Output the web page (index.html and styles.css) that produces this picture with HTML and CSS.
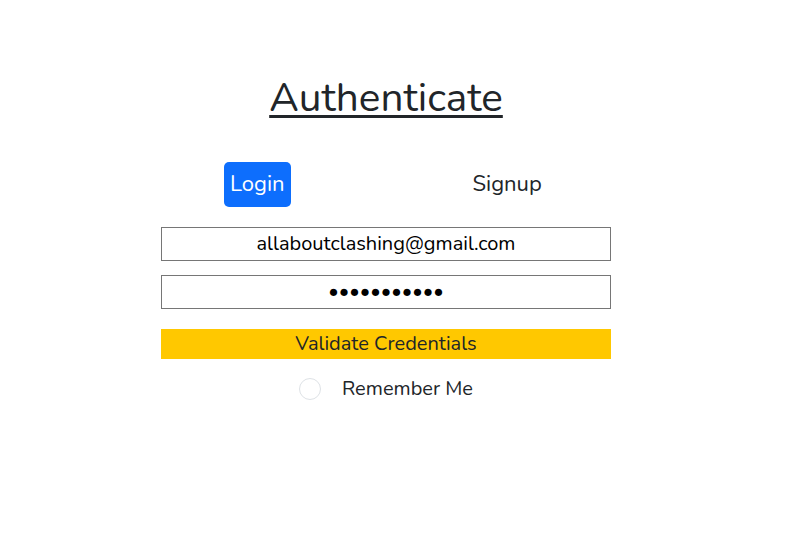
FILE: index.html
```html
<!DOCTYPE html>
<html>
<head>
<meta charset="utf-8">
<link rel="stylesheet" href="styles.css">
</head>
<body>
<main class="auth">
  <h1 class="title">Authenticate</h1>
  <nav class="tabs">
    <button class="tab tab-active">Login</button>
    <button class="tab">Signup</button>
  </nav>
  <form class="form">
    <input class="field" type="email" value="allaboutclashing@gmail.com">
    <input class="field field-pass" type="password" value="abcdefghijk">
    <button type="button" class="submit">Validate Credentials</button>
    <label class="remember">
      <span class="radio"></span>
      <span class="remember-text">Remember Me</span>
    </label>
  </form>
</main>
</body>
</html>
```
FILE: styles.css
```css
html, body {
  margin: 0;
  padding: 0;
  background: #fff;
}
body {
  font-family: "Nunito", "Open Sans", "Noto Sans", sans-serif;
  color: #212529;
}
.auth {
  width: 450px;
  margin-left: 161px;
  display: flex;
  flex-direction: column;
  align-items: center;
}
.title {
  margin: 74px 0 0;
  font-size: 40.5px;
  font-weight: 400;
  line-height: 48px;
  text-decoration: underline;
  text-decoration-thickness: 3px;
  text-underline-offset: 4px;
}
.tabs {
  display: flex;
  width: 100%;
  margin-top: 40px;
}
.tab {
  font-family: inherit;
  font-size: 22px;
  color: #212529;
  background: none;
  border: 0;
  border-radius: 5px;
  height: 45px;
  padding: 0 6px 1px;
  margin-left: 176px;
}
.tab-active {
  background: #0d6efd;
  color: #fff;
  margin-left: 63px;
}
.form {
  width: 100%;
  display: flex;
  flex-direction: column;
  margin-top: 20px;
}
.field {
  box-sizing: border-box;
  width: 100%;
  height: 34px;
  border: 1px solid #767676;
  border-radius: 0;
  font-family: inherit;
  font-size: 20px;
  color: #000;
  text-align: center;
  padding: 0 0 2px;
  margin: 0 0 14px;
}
.field-pass {
  margin-bottom: 20px;
}
.submit {
  height: 30px;
  background: #ffc800;
  border: 0;
  font-family: inherit;
  font-size: 20px;
  color: #212529;
  padding: 0 0 2px;
}
.remember {
  display: flex;
  align-items: center;
  justify-content: center;
  margin-top: 16px;
}
.radio {
  box-sizing: border-box;
  width: 22px;
  height: 22px;
  border: 1px solid #dee2e6;
  border-radius: 50%;
  margin-right: 21px;
}
.remember-text {
  font-size: 20px;
}
```
